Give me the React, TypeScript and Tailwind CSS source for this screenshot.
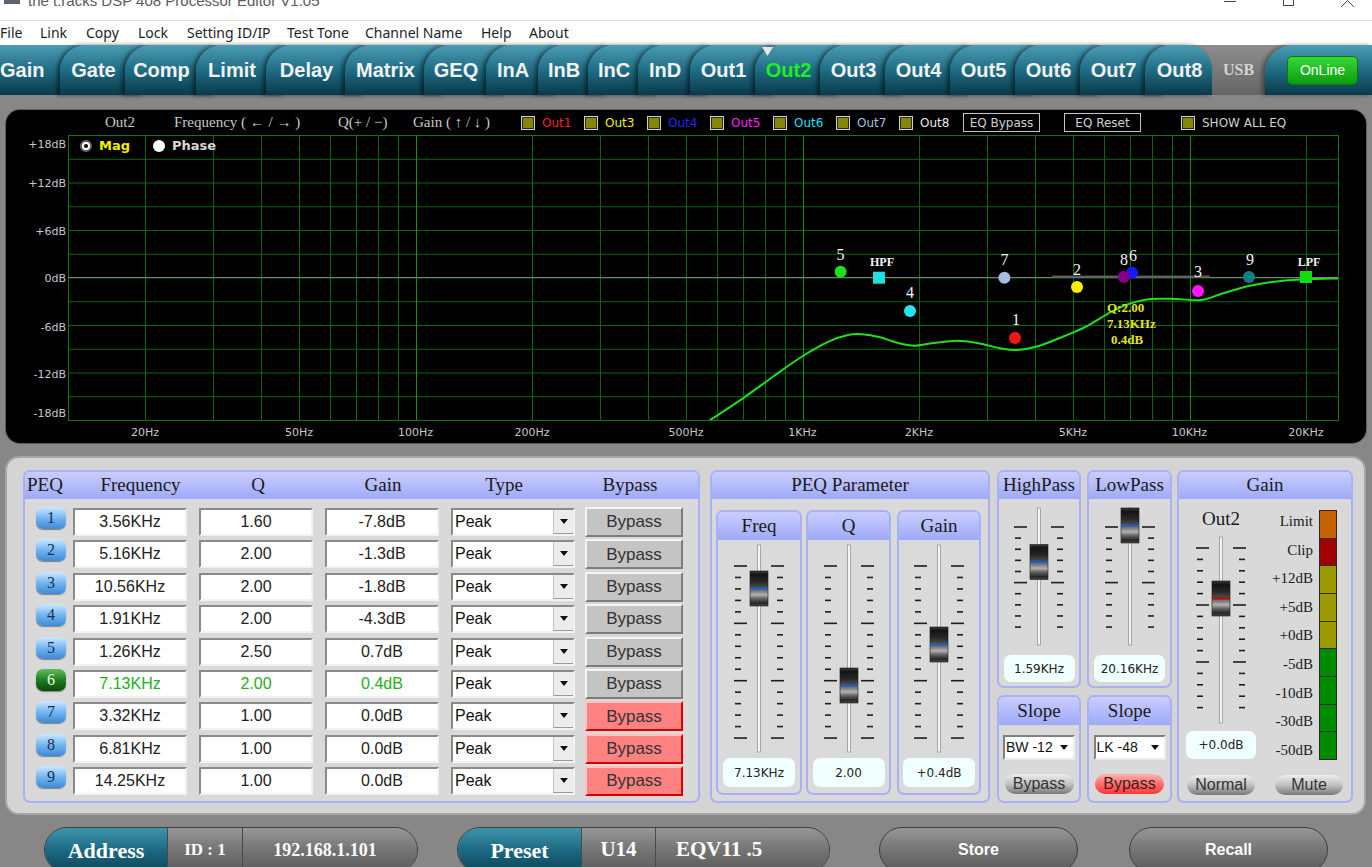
import React from "react";

const SERIF = "font-['Liberation_Serif',serif]";
const DV = "font-['DejaVu_Sans',sans-serif]";

type Tick = [number, boolean];

function makeTicks(start: number, pitch: number, n: number, longEvery: number): Tick[] {
  return Array.from({ length: n }, (_, i) => [start + i * pitch, i % longEvery === 0] as Tick);
}

function Fader({
  w,
  h,
  top,
  bottom,
  tk,
  knob,
  line = "#1d5fc4",
}: {
  w: number;
  h: number;
  top: number;
  bottom: number;
  tk: Tick[];
  knob: number;
  line?: string;
}) {
  const c = Math.round(w / 2);
  return (
    <svg width={w} height={h} className="block shrink-0">
      <defs>
        <linearGradient id="knobGrad" x1="0" y1="0" x2="0" y2="1">
          <stop offset="0" stopColor="#3c3c3c" />
          <stop offset="0.1" stopColor="#141414" />
          <stop offset="0.3" stopColor="#262626" />
          <stop offset="0.45" stopColor="#474747" />
          <stop offset="0.58" stopColor="#7e7e7e" />
          <stop offset="0.68" stopColor="#b2b2b2" />
          <stop offset="0.8" stopColor="#5c5c5c" />
          <stop offset="0.92" stopColor="#262626" />
          <stop offset="1" stopColor="#4a4a4a" />
        </linearGradient>
      </defs>
      <rect x={c - 1.5} y={top} width={3} height={bottom - top} fill="#f4f4f4" stroke="#8c8c8c" strokeWidth={0.7} />
      {tk.map(([y, long], i) => (
        <g key={i} fill="#1e1e1e">
          <rect x={long ? c - 25 : c - 24} y={y - 0.8} width={long ? 13 : 6} height={1.6} />
          <rect x={long ? c + 12 : c + 18} y={y - 0.8} width={long ? 13 : 6} height={1.6} />
        </g>
      ))}
      <g transform={`translate(${c - 9},${knob - 17.5})`}>
        <rect width={18} height={35} fill="url(#knobGrad)" stroke="#1a1a1a" strokeWidth={0.6} />
        <rect y={16.5} width={18} height={2} fill={line} />
      </g>
    </svg>
  );
}

function TitleBar() {
  return (
    <div className="h-[20px] bg-white flex items-start overflow-hidden shrink-0">
      <div className="ml-[4px] w-[16px] h-[4px] bg-[#5b6270]" />
      <span className="ml-[8px] -mt-[7px] text-[15px] leading-[15px] text-[#5a5a5a] whitespace-nowrap">
        the t.racks DSP 408 Processor Editor V1.05
      </span>
      <div className="ml-auto flex items-start">
        <div className="w-[12px] h-px bg-[#444] mt-[1px]" />
        <div className="ml-[47px] w-[11px] h-[11px] -mt-[5px] border border-[#444]" />
        <svg className="ml-[47px] mr-[18px] block" width="13" height="7" viewBox="0 6 13 7">
          <path d="M0 13L6.5 6.5L13 13" stroke="#444" fill="none" />
        </svg>
      </div>
    </div>
  );
}

const MENU = [
  { n: "File", w: "w-[40px]" },
  { n: "Link", w: "w-[46px]" },
  { n: "Copy", w: "w-[52px]" },
  { n: "Lock", w: "w-[49px]" },
  { n: "Setting ID/IP", w: "w-[100px]" },
  { n: "Test Tone", w: "w-[78px]" },
  { n: "Channel Name", w: "w-[116px]" },
  { n: "Help", w: "w-[48px]" },
  { n: "About", w: "w-[60px]" },
];

function MenuBar() {
  return (
    <div className="h-[24px] bg-white flex items-center shrink-0 font-['Noto_Sans',sans-serif] text-[14px] text-[#1e1e1e]">
      {MENU.map((m) => (
        <div key={m.n} className={`${m.w} shrink-0 whitespace-nowrap -mt-[2px]`}>
          {m.n}
        </div>
      ))}
    </div>
  );
}

// widths include a 20px tail that slides under the next tab
const TABS = [
  { n: "Gate", w: "w-[85px]" },
  { n: "Comp", w: "w-[91px]" },
  { n: "Limit", w: "w-[90px]" },
  { n: "Delay", w: "w-[99px]" },
  { n: "Matrix", w: "w-[99px]" },
  { n: "GEQ", w: "w-[82px]" },
  { n: "InA", w: "w-[72px]" },
  { n: "InB", w: "w-[70px]" },
  { n: "InC", w: "w-[70px]" },
  { n: "InD", w: "w-[72px]" },
  { n: "Out1", w: "w-[85px]" },
  { n: "Out2", w: "w-[85px]" },
  { n: "Out3", w: "w-[85px]" },
  { n: "Out4", w: "w-[85px]" },
  { n: "Out5", w: "w-[85px]" },
  { n: "Out6", w: "w-[85px]" },
  { n: "Out7", w: "w-[85px]" },
];

const TAB_BG = "bg-linear-to-b from-[#4b9db3] via-[#1f6d85] to-[#0a394b]";

function TabBar() {
  return (
    <div className="h-[50px] flex shrink-0 bg-linear-to-b from-[#8e8e8e] to-[#656565] text-[20px] font-bold">
      <div className={`relative w-[80px] -mr-[20px] pr-[20px] h-full shrink-0 flex items-center ${TAB_BG} text-[#f2f2f2]`}>Gain</div>
      {TABS.map((t) => {
        const active = t.n === "Out2";
        return (
          <div
            key={t.n}
            className={`relative ${t.w} -mr-[20px] pr-[18px] h-full shrink-0 flex items-center justify-center rounded-tl-[26px] ${TAB_BG} shadow-[-3px_0_4px_rgba(0,0,0,0.5)] ${
              active ? "text-[#22ee22]" : "text-[#f2f2f2]"
            }`}
          >
            {active && (
              <svg className="absolute left-[7px] top-[2px]" width="11" height="9">
                <path d="M0 0H11L5.5 9Z" fill="#e6e6e6" />
              </svg>
            )}
            {t.n}
          </div>
        );
      })}
      <div
        className={`relative w-[67px] pl-[2px] h-full shrink-0 flex items-center justify-center rounded-tl-[26px] rounded-tr-[24px] ${TAB_BG} shadow-[-3px_0_4px_rgba(0,0,0,0.5)] text-[#f2f2f2]`}
      >
        Out8
      </div>
      <div className={`w-[53px] h-full shrink-0 flex items-center justify-center ${SERIF} text-[16px] text-[#d4d4d4]`}>
        USB
      </div>
      <div className={`flex-1 h-full rounded-tl-[28px] ${TAB_BG} shadow-[-3px_0_4px_rgba(0,0,0,0.4)] flex items-center`}>
        <div className="ml-[22px] w-[71px] h-[29px] rounded-[5px] border border-[#0b7a0b] bg-linear-to-b from-[#35d835] to-[#0a9c0a] flex items-center justify-center text-[14px] font-normal text-white">
          OnLine
        </div>
      </div>
    </div>
  );
}

function Chk({ label, color, w }: { label: string; color: string; w: string }) {
  return (
    <div className={`flex items-center shrink-0 ${w}`}>
      <div className="w-[14px] h-[14px] border border-[#d0d0d0] bg-[#868600] shadow-[inset_0_0_0_1px_#2a2a2a]" />
      <span className={`ml-[7px] text-[12px] ${DV} ${color} whitespace-nowrap`}>{label}</span>
    </div>
  );
}

const fx = (f: number) => 139 + 387 * Math.log10(f / 20);
const P = (x: number, y: number): [number, number] => [x - 6, y - 135];

const CURVE: [number, number][] = [
  [706.5, 422.5],
  [742.9, 398.3],
  [772.9, 376.7],
  [802.9, 356],
  [828.6, 341.7],
  [847.9, 335],
  [862, 334.3],
  [880.1, 337.3],
  [897.2, 342.7],
  [914.4, 345.7],
  [931.6, 343.3],
  [957.3, 340.7],
  [978.7, 343.3],
  [1000.2, 348.3],
  [1017.3, 350],
  [1038.8, 346],
  [1064.5, 336],
  [1085.9, 326.7],
  [1111.6, 311.7],
  [1128.8, 304],
  [1150.2, 299],
  [1175.9, 299],
  [1201.7, 300],
  [1223.1, 293.3],
  [1248.9, 286],
  [1274.6, 281.7],
  [1304.6, 279.3],
  [1341, 278.3],
].map(([x, y]) => P(x, y));

function smoothPath(pts: [number, number][]) {
  let d = `M${pts[0][0]},${pts[0][1]}`;
  for (let i = 0; i < pts.length - 1; i++) {
    const p0 = pts[i - 1] || pts[i];
    const p1 = pts[i];
    const p2 = pts[i + 1];
    const p3 = pts[i + 2] || p2;
    const c1x = p1[0] + (p2[0] - p0[0]) / 6;
    const c1y = p1[1] + (p2[1] - p0[1]) / 6;
    const c2x = p2[0] - (p3[0] - p1[0]) / 6;
    const c2y = p2[1] - (p3[1] - p1[1]) / 6;
    d += ` C${c1x.toFixed(1)},${c1y.toFixed(1)} ${c2x.toFixed(1)},${c2y.toFixed(1)} ${p2[0].toFixed(1)},${p2[1].toFixed(1)}`;
  }
  return d;
}

const MARKERS = [
  { x: 840.6, y: 271.7, c: "#22dd22", l: "5", lx: 840.6, ly: 254, sq: false },
  { x: 879, y: 277.7, c: "#22dede", l: "HPF", lx: 882, ly: 262, sq: true },
  { x: 910, y: 311, c: "#22e4f2", l: "4", lx: 910, ly: 292.7, sq: false },
  { x: 1004.4, y: 277.7, c: "#a8bde0", l: "7", lx: 1004.4, ly: 259, sq: false },
  { x: 1015, y: 338, c: "#ff1414", l: "1", lx: 1016, ly: 319, sq: false },
  { x: 1077, y: 287, c: "#ffee00", l: "2", lx: 1077, ly: 269, sq: false },
  { x: 1132, y: 272.7, c: "#1818ff", l: "6", lx: 1133, ly: 255, sq: false },
  { x: 1123.7, y: 277, c: "#850085", l: "8", lx: 1124, ly: 259, sq: false },
  { x: 1198, y: 291, c: "#ff18ff", l: "3", lx: 1198, ly: 271.7, sq: false },
  { x: 1249, y: 277, c: "#0a8080", l: "9", lx: 1250, ly: 259, sq: false },
  { x: 1306, y: 277, c: "#12dd12", l: "LPF", lx: 1309, ly: 262, sq: true },
];

const DB_LABELS: [string, number][] = [
  ["+18dB", 9],
  ["+12dB", 48],
  ["+6dB", 96],
  ["0dB", 143],
  ["-6dB", 192],
  ["-12dB", 239],
  ["-18dB", 278],
];

const F_LABELS: [string, number][] = [
  ["20Hz", 20],
  ["50Hz", 50],
  ["100Hz", 100],
  ["200Hz", 200],
  ["500Hz", 500],
  ["1KHz", 1000],
  ["2KHz", 2000],
  ["5KHz", 5000],
  ["10KHz", 10000],
  ["20KHz", 20000],
];

function Graph() {
  const freqs: number[] = [];
  for (const dec of [10, 100, 1000, 10000]) {
    for (let m = 1; m <= 9; m++) freqs.push(dec * m);
  }
  const vl = freqs.filter((f) => f >= 20 && fx(f) < 1332);
  return (
    <div className="ml-[6px] w-[1360px] h-[333px] rounded-[14px] bg-black shadow-[0_0_0_1px_#5c5c5c] overflow-hidden flex flex-col">
      <div className="h-[25px] shrink-0 flex items-center pl-[99px] text-[#c8c8c8]">
        <div className={`w-[69px] shrink-0 ${SERIF} text-[15px]`}>Out2</div>
        <div className={`w-[164px] shrink-0 ${SERIF} text-[15px] whitespace-nowrap`}>Frequency ( ← / → )</div>
        <div className={`w-[75px] shrink-0 ${SERIF} text-[15px] whitespace-nowrap`}>Q(+ / −)</div>
        <div className={`w-[108px] shrink-0 ${SERIF} text-[15px] whitespace-nowrap`}>Gain ( ↑ / ↓ )</div>
        <Chk label="Out1" color="text-[#ff2020]" w="w-[63px]" />
        <Chk label="Out3" color="text-[#f0f000]" w="w-[63px]" />
        <Chk label="Out4" color="text-[#2424ff]" w="w-[63px]" />
        <Chk label="Out5" color="text-[#ff22ff]" w="w-[63px]" />
        <Chk label="Out6" color="text-[#22e0f0]" w="w-[63px]" />
        <Chk label="Out7" color="text-[#a8bde0]" w="w-[63px]" />
        <Chk label="Out8" color="text-[#e8e8e8]" w="w-[64px]" />
        <div className="w-[101px] shrink-0">
          <div className={`w-[77px] h-[19px] border border-[#c4c4c4] flex items-center justify-center text-[12px] ${DV} text-[#d0d0d0]`}>
            EQ Bypass
          </div>
        </div>
        <div className="w-[117px] shrink-0">
          <div className={`w-[77px] h-[19px] border border-[#c4c4c4] flex items-center justify-center text-[12px] ${DV} text-[#d0d0d0]`}>
            EQ Reset
          </div>
        </div>
        <Chk label="SHOW ALL EQ" color="text-[#d0d0d0]" w="w-[120px]" />
      </div>
      <div className="relative">
        <svg width={1360} height={308} className="block">
          <defs>
            <clipPath id="plotClip">
              <rect x={62} y={0} width={1270} height={285} />
            </clipPath>
          </defs>
          {Array.from({ length: 13 }, (_, k) => (
            <line key={k} x1={62} x2={1332} y1={k * 23.75 + 0.5} y2={k * 23.75 + 0.5} stroke="#0b680b" strokeWidth={1} />
          ))}
          {vl.map((f) => {
            const x = Math.round(fx(f)) + 0.5;
            const dec = f === 100 || f === 1000 || f === 10000;
            return <line key={f} x1={x} x2={x} y1={0} y2={285} stroke={dec ? "#139213" : "#0b680b"} strokeWidth={1} />;
          })}
          <rect x={62.5} y={0.5} width={1270} height={285} fill="none" stroke="#107a10" strokeWidth={1} />
          <line x1={62} x2={1332} y1={142.5} y2={142.5} stroke="#7c7c7c" strokeWidth={1} />
          <line x1={1046} x2={1204} y1={141.5} y2={141.5} stroke="#5a5a5a" strokeWidth={2} />
          <path d={smoothPath(CURVE)} fill="none" stroke="#1fe01f" strokeWidth={2} clipPath="url(#plotClip)" />
          {DB_LABELS.map(([t, y]) => (
            <text key={t} x={60} y={y} textAnchor="end" dominantBaseline="central" fill="#c8c8c8" fontSize={11} fontFamily="DejaVu Sans, sans-serif">
              {t}
            </text>
          ))}
          {F_LABELS.map(([t, f]) => (
            <text key={t} x={fx(f)} y={297} textAnchor="middle" dominantBaseline="central" fill="#c8c8c8" fontSize={11} fontFamily="DejaVu Sans, sans-serif">
              {t}
            </text>
          ))}
          {MARKERS.map((m) => {
            const [x, y] = P(m.x, m.y);
            const [lx, ly] = P(m.lx, m.ly);
            return (
              <g key={m.l}>
                {m.sq ? <rect x={x - 6} y={y - 6} width={12} height={12} fill={m.c} /> : <circle cx={x} cy={y} r={6} fill={m.c} />}
                <text
                  x={lx}
                  y={ly}
                  textAnchor="middle"
                  dominantBaseline="central"
                  fill="#f4f4f4"
                  fontSize={m.sq ? 12 : 16}
                  fontWeight={m.sq ? 700 : 400}
                  fontFamily="Liberation Serif, serif"
                >
                  {m.l}
                </text>
              </g>
            );
          })}
          <g fill="#e4e418" fontSize={13} fontWeight={700} fontFamily="Liberation Serif, serif">
            <text x={1101} y={172} dominantBaseline="central">Q:2.00</text>
            <text x={1101} y={188} dominantBaseline="central">7.13KHz</text>
            <text x={1105} y={204} dominantBaseline="central">0.4dB</text>
          </g>
        </svg>
        <div className="absolute left-[74px] top-[4px] h-[14px] flex items-center">
          <div className="w-[12px] h-[12px] rounded-full bg-white border-2 border-[#666] flex items-center justify-center">
            <div className="w-[4px] h-[4px] rounded-full bg-black" />
          </div>
          <span className={`ml-[7px] text-[13px] font-bold text-[#f0f000] ${DV}`}>Mag</span>
          <div className="ml-[23px] w-[12px] h-[12px] rounded-full bg-white" />
          <span className={`ml-[7px] text-[13px] font-bold text-[#d8d8d8] ${DV}`}>Phase</span>
        </div>
      </div>
    </div>
  );
}

const GROUP = "rounded-[7px] border-2 border-[#aab0f4] bg-[#d9d9d9] overflow-hidden flex flex-col shrink-0";
const GHEAD = `h-[27px] shrink-0 self-stretch bg-linear-to-b from-[#c9cdff] to-[#9faaf7] flex items-center justify-center text-[19px] text-[#1a1a1a] ${SERIF}`;
const INPUT =
  "h-[28px] bg-white border-2 border-t-[#8a8a8a] border-l-[#8a8a8a] border-b-[#f2f2f2] border-r-[#f2f2f2] flex items-center justify-center text-[16px] shrink-0";
const VALUE = `bg-[#f0ffff] rounded-[7px] flex items-center justify-center text-[12px] ${DV} text-[#222] shrink-0`;
const PILL =
  "h-[20px] rounded-[10px] bg-linear-to-b from-[#ededed] via-[#c2c2c2] to-[#7a7a7a] flex items-center justify-center text-[16px] text-[#333] leading-none shrink-0";
const PILL_RED =
  "h-[20px] rounded-[10px] bg-linear-to-b from-[#ffb4b4] via-[#ff6c6c] to-[#ff3434] flex items-center justify-center text-[16px] text-[#3a2020] leading-none shrink-0";

const ROWS = [
  ["1", "3.56KHz", "1.60", "-7.8dB", false],
  ["2", "5.16KHz", "2.00", "-1.3dB", false],
  ["3", "10.56KHz", "2.00", "-1.8dB", false],
  ["4", "1.91KHz", "2.00", "-4.3dB", false],
  ["5", "1.26KHz", "2.50", "0.7dB", false],
  ["6", "7.13KHz", "2.00", "0.4dB", false],
  ["7", "3.32KHz", "1.00", "0.0dB", true],
  ["8", "6.81KHz", "1.00", "0.0dB", true],
  ["9", "14.25KHz", "1.00", "0.0dB", true],
] as const;

function DownTri() {
  return (
    <svg width="8" height="5" className="block">
      <path d="M0 0H8L4 5Z" fill="#111" />
    </svg>
  );
}

function PeqTable() {
  return (
    <div className={`${GROUP} w-[677px] h-[333px]`}>
      <div className={`h-[27px] shrink-0 bg-linear-to-b from-[#c9cdff] to-[#9faaf7] flex items-center text-[19px] text-[#1a1a1a] ${SERIF}`}>
        <div className="w-[48px] pl-[2px] shrink-0">PEQ</div>
        <div className="w-[135px] text-center shrink-0">Frequency</div>
        <div className="w-[100px] text-center shrink-0">Q</div>
        <div className="w-[150px] text-center shrink-0">Gain</div>
        <div className="w-[92px] text-center shrink-0">Type</div>
        <div className="w-[148px] pl-[12px] text-center shrink-0">Bypass</div>
      </div>
      <div className="pt-[8px] flex flex-col gap-[2.4px]">
        {ROWS.map(([n, f, q, g, red]) => {
          const act = n === "6";
          const tc = act ? "text-[#22b022]" : "text-[#222]";
          return (
            <div key={n} className="h-[30px] flex items-center pl-[11px]">
              <div
                className={
                  act
                    ? `w-[30px] h-[22px] self-start rounded-[7px] bg-linear-to-b from-[#5fbf5f] via-[#217d21] to-[#0c4a0c] flex items-center justify-center text-[16px] ${SERIF} text-[#e8ffe8] shadow-[0_1px_1px_rgba(0,0,0,0.4)] shrink-0`
                    : `w-[30px] h-[22px] self-start rounded-[7px] bg-linear-to-b from-[#cde8ff] via-[#72b6f2] to-[#3e8ad4] flex items-center justify-center text-[16px] ${SERIF} text-[#1c2c55] shadow-[0_1px_1px_rgba(0,0,0,0.4)] shrink-0`
                }
              >
                {n}
              </div>
              <div className={`${INPUT} ml-[7px] w-[114px] ${tc}`}>{f}</div>
              <div className={`${INPUT} ml-[12px] w-[114px] ${tc}`}>{q}</div>
              <div className={`${INPUT} ml-[12px] w-[114px] ${tc}`}>{g}</div>
              <div className="ml-[12px] w-[124px] h-[28px] shrink-0 bg-white border-2 border-t-[#8a8a8a] border-l-[#8a8a8a] border-b-[#f2f2f2] border-r-[#f2f2f2] flex items-center">
                <span className="flex-1 pl-[2px] text-[16px] text-[#111]">Peak</span>
                <div className="w-[20px] h-full bg-[#ececec] border-l border-[#c4c4c4] border-b border-b-[#9a9a9a] flex items-center justify-center">
                  <DownTri />
                </div>
              </div>
              <div
                className={
                  red
                    ? "ml-[10px] w-[98px] h-[30px] shrink-0 bg-[#ff8282] border-2 border-t-[#ffc4c4] border-l-[#ffc4c4] border-b-[#d40000] border-r-[#d40000] flex items-center justify-center text-[17px] text-[#333]"
                    : "ml-[10px] w-[98px] h-[30px] shrink-0 bg-[#c4c4c4] border-2 border-t-[#f4f4f4] border-l-[#f4f4f4] border-b-[#7c7c7c] border-r-[#7c7c7c] flex items-center justify-center text-[17px] text-[#333]"
                }
              >
                Bypass
              </div>
            </div>
          );
        })}
      </div>
    </div>
  );
}

const PEQ_TICKS = makeTicks(26, 11.47, 16, 5);

function SubFader({ title, w, knob, value }: { title: string; w: string; knob: number; value: string }) {
  return (
    <div className={`${GROUP} ${w} h-[285px] bg-[#dadada] items-center`}>
      <div className={`${GHEAD} h-[28px]`}>{title}</div>
      <Fader w={80} h={215} top={5} bottom={212} tk={PEQ_TICKS} knob={knob} />
      <div className={`${VALUE} mt-[3px] w-[72px] h-[29px]`}>{value}</div>
    </div>
  );
}

function PeqParam() {
  return (
    <div className={`${GROUP} ml-[10px] w-[280px] h-[333px]`}>
      <div className={GHEAD}>PEQ Parameter</div>
      <div className="flex pl-[4px] mt-[11px]">
        <SubFader title="Freq" w="w-[86px]" knob={48.5} value="7.13KHz" />
        <div className="ml-[4px]">
          <SubFader title="Q" w="w-[85px]" knob={145.5} value="2.00" />
        </div>
        <div className="ml-[6px]">
          <SubFader title="Gain" w="w-[84px]" knob={104.5} value="+0.4dB" />
        </div>
      </div>
    </div>
  );
}

const PASS_TICKS = makeTicks(28, 11.12, 10, 5);

function PassCol({
  title,
  knob,
  value,
  slope,
  red,
  w,
}: {
  title: string;
  knob: number;
  value: string;
  slope: string;
  red: boolean;
  w: string;
}) {
  return (
    <div className="flex flex-col shrink-0">
      <div className={`${GROUP} ${w} h-[218px] items-center`}>
        <div className={GHEAD}>{title}</div>
        <Fader w={80} h={153} top={9} bottom={146} tk={PASS_TICKS} knob={knob} />
        <div className={`${VALUE} mt-[3px] w-[71px] h-[27px]`}>{value}</div>
      </div>
      <div className={`${GROUP} ${w} h-[108px] mt-[7px] items-center`}>
        <div className={`${GHEAD} h-[28px]`}>Slope</div>
        <div className="mt-[10px] w-[72px] h-[25px] bg-white border-2 border-t-[#808080] border-l-[#808080] border-b-[#ececec] border-r-[#ececec] flex items-center pl-[1px] text-[14px] text-[#111] whitespace-nowrap">
          {slope}
          <span className="ml-auto mr-[5px]">
            <DownTri />
          </span>
        </div>
        <div className={`${red ? PILL_RED : PILL} mt-[14px] w-[69px]`}>Bypass</div>
      </div>
    </div>
  );
}

const METER = [
  { l: "Limit", c: "bg-[#c66200]" },
  { l: "Clip", c: "bg-[#a30000]" },
  { l: "+12dB", c: "bg-[#9c9a00]" },
  { l: "+5dB", c: "bg-[#9c9a00]" },
  { l: "+0dB", c: "bg-[#9c9a00]" },
  { l: "-5dB", c: "bg-[#008a00]" },
  { l: "-10dB", c: "bg-[#008a00]" },
  { l: "-30dB", c: "bg-[#008a00]" },
  { l: "-50dB", c: "bg-[#008a00]" },
];

function GainGroup() {
  return (
    <div className={`${GROUP} ml-[5px] w-[176px] h-[333px]`}>
      <div className={GHEAD}>Gain</div>
      <div className="flex">
        <div className="w-[84px] flex flex-col items-center shrink-0">
          <div className={`mt-[8px] h-[24px] leading-[24px] text-[19px] text-[#1a1a1a] ${SERIF}`}>Out2</div>
          <Fader w={82} h={196} top={6} bottom={192} tk={makeTicks(17, 11.4, 15, 5)} knob={67.5} line="#c40000" />
          <div className={`${VALUE} mt-[4px] w-[70px] h-[28px]`}>+0.0dB</div>
          <div className={`${PILL} mt-[16px] w-[68px]`}>Normal</div>
        </div>
        <div className="flex-1 flex flex-col">
          <div className="mt-[11px] h-[250px] flex items-start">
            <div className="w-[50px] -mt-[3px] flex flex-col shrink-0">
              {METER.map((m) => (
                <div key={m.l} className={`h-[28.6px] flex items-center justify-end text-[15px] text-[#1a1a1a] ${SERIF} whitespace-nowrap`}>
                  {m.l}
                </div>
              ))}
            </div>
            <div className="ml-[6px] w-[18px] h-[250px] flex flex-col border border-[#2a2a2a] shrink-0">
              {METER.map((m) => (
                <div key={m.l} className={`flex-1 ${m.c} border-t border-[#2a2a2a] first:border-t-0`} />
              ))}
            </div>
          </div>
          <div className={`${PILL} mt-[15px] ml-[12px] w-[68px]`}>Mute</div>
        </div>
      </div>
    </div>
  );
}

function LowerPanel() {
  return (
    <div className="ml-[5px] mt-[13px] w-[1361px] h-[359px] shrink-0 rounded-[14px] bg-[#d4d4d4] border-2 border-[#a6a6a6] pt-[12px] pl-[16px] flex items-start">
      <PeqTable />
      <PeqParam />
      <div className="ml-[7px]">
        <PassCol title="HighPass" knob={63} value="1.59KHz" slope="BW -12" red={false} w="w-[84px]" />
      </div>
      <div className="ml-[6px]">
        <PassCol title="LowPass" knob={26.5} value="20.16KHz" slope="LK -48" red={true} w="w-[85px]" />
      </div>
      <GainGroup />
    </div>
  );
}

const TEAL = "bg-linear-to-b from-[#3d95ab] via-[#1c6a82] to-[#0d4558]";
const GRAY = "bg-linear-to-b from-[#979797] via-[#747474] to-[#5c5c5c]";

function BottomBar() {
  return (
    <div className={`mt-[12px] h-[46px] flex shrink-0 font-bold text-white`}>
      <div className={`ml-[44px] w-[374px] h-full rounded-full overflow-hidden flex border border-[#3e3e3e] ${SERIF} shrink-0`}>
        <div className={`w-[122px] ${TEAL} flex items-center justify-center text-[22px]`}>Address</div>
        <div className={`w-[75px] ${GRAY} border-l border-[#4a4a4a] flex items-center justify-center text-[17px]`}>ID : 1</div>
        <div className={`flex-1 ${GRAY} border-l border-[#4a4a4a] flex items-center justify-center text-[18px] pr-[10px]`}>192.168.1.101</div>
      </div>
      <div className={`ml-[39px] w-[373px] h-full rounded-full overflow-hidden flex border border-[#3e3e3e] ${SERIF} shrink-0`}>
        <div className={`w-[123px] ${TEAL} flex items-center justify-center text-[22px]`}>Preset</div>
        <div className={`w-[74px] ${GRAY} border-l border-[#4a4a4a] flex items-center justify-center text-[21px]`}>U14</div>
        <div className={`flex-1 ${GRAY} border-l border-[#4a4a4a] flex items-center pl-[20px] text-[21px]`}>EQV11 .5</div>
      </div>
      <div className={`ml-[49px] w-[199px] h-full rounded-full border border-[#3e3e3e] ${GRAY} flex items-center justify-center text-[16px] shrink-0`}>
        Store
      </div>
      <div className={`ml-[51px] w-[199px] h-full rounded-full border border-[#3e3e3e] ${GRAY} flex items-center justify-center text-[16px] shrink-0`}>
        Recall
      </div>
    </div>
  );
}

export default function App() {
  return (
    <div className="w-[1372px] h-[867px] overflow-hidden bg-[#878787] flex flex-col font-['Liberation_Sans',sans-serif]">
      <TitleBar />
      <div className="h-px bg-[#e2e2e2] shrink-0" />
      <MenuBar />
      <TabBar />
      <div className="mt-[15px] shrink-0">
        <Graph />
      </div>
      <LowerPanel />
      <BottomBar />
    </div>
  );
}
